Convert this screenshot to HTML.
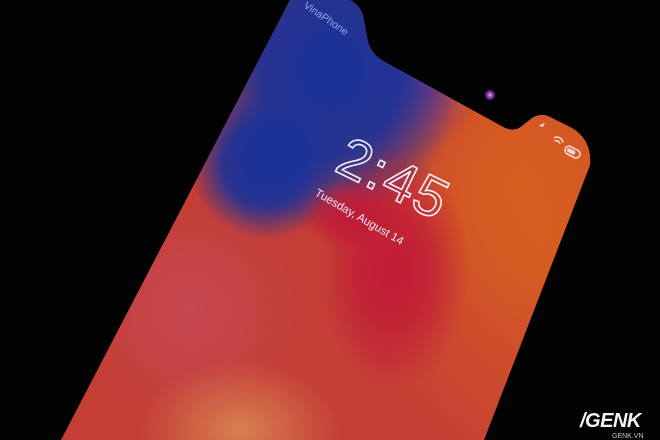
<!DOCTYPE html>
<html><head><meta charset="utf-8"><style>
html,body{margin:0;padding:0;background:#030304;width:660px;height:440px;overflow:hidden;}
svg{display:block}
</style></head><body>
<svg width="660" height="440" viewBox="0 0 660 440" xmlns="http://www.w3.org/2000/svg">
<defs>
<clipPath id="scr">
<path d="M290,0 L350,0 Q362,6 364,20 L368,42 Q372,55 385,62 L505,128 Q515,132 522,126 L532,118 Q540,113 548,116 L572,128 Q592,140 590,165 L484,440 L61,440 Z"/>
</clipPath>
<radialGradient id="gBlue"><stop offset="0" stop-color="#15329a"/><stop offset="0.55" stop-color="#1a3298" stop-opacity="0.9"/><stop offset="1" stop-color="#1a3298" stop-opacity="0"/></radialGradient>
<radialGradient id="gPurp"><stop offset="0" stop-color="#7a3a88"/><stop offset="1" stop-color="#7a3a88" stop-opacity="0"/></radialGradient>
<radialGradient id="gRed"><stop offset="0" stop-color="#c01a36"/><stop offset="0.5" stop-color="#c01a36" stop-opacity="0.7"/><stop offset="1" stop-color="#c01a36" stop-opacity="0"/></radialGradient>
<radialGradient id="gPink"><stop offset="0" stop-color="#c64852"/><stop offset="1" stop-color="#c64852" stop-opacity="0"/></radialGradient>
<radialGradient id="gPeach"><stop offset="0" stop-color="#d88050"/><stop offset="1" stop-color="#d88050" stop-opacity="0"/></radialGradient>
<radialGradient id="gOr"><stop offset="0" stop-color="#d85e20"/><stop offset="1" stop-color="#d85e20" stop-opacity="0"/></radialGradient>
<radialGradient id="gDot"><stop offset="0" stop-color="#f0b0ff"/><stop offset="0.3" stop-color="#b050d0"/><stop offset="1" stop-color="#b050d0" stop-opacity="0"/></radialGradient>
</defs>
<rect width="660" height="440" fill="#c43e36"/>
<rect width="660" height="440" fill="#030304"/>
<g clip-path="url(#scr)">
<rect width="660" height="440" fill="#c43e36"/>
<ellipse cx="540" cy="230" rx="190" ry="260" fill="url(#gOr)"/>
<ellipse cx="520" cy="180" rx="120" ry="140" fill="url(#gOr)"/>
<ellipse cx="410" cy="80" rx="70" ry="80" fill="url(#gPurp)"/>
<ellipse cx="330" cy="70" rx="130" ry="160" fill="url(#gBlue)"/>
<ellipse cx="265" cy="165" rx="75" ry="75" fill="url(#gBlue)"/>
<ellipse cx="395" cy="270" rx="75" ry="120" fill="url(#gRed)"/>
<ellipse cx="350" cy="215" rx="50" ry="35" fill="url(#gRed)"/>
<ellipse cx="190" cy="310" rx="110" ry="110" fill="url(#gPink)"/>
<ellipse cx="240" cy="430" rx="100" ry="70" fill="url(#gPeach)"/>
</g>
<circle cx="490" cy="95" r="6" fill="url(#gDot)"/>
<g fill="#e8ecff" font-family="Liberation Sans, sans-serif">
<text x="0" y="0" font-size="10.5" transform="translate(303,7) rotate(34)" fill="#8aa8f0">VinaPhone</text>
<text x="0" y="0" font-size="56" letter-spacing="2" transform="translate(333,170) rotate(26)" fill="none" stroke="#eef0ff" stroke-width="1.6">2:45</text>
<text x="0" y="0" font-size="11.5" transform="translate(314,195) rotate(30)">Tuesday, August 14</text>
</g>
<g fill="none" stroke="#f0d8d0" stroke-width="1.6" transform="rotate(28 560 150)">
<path d="M530,138 l4,-5 l0,5 z" fill="#f0d8d0" stroke="none"/>
<path d="M549,142 a6,6 0 0 1 10,0 M551,144.5 a4,4 0 0 1 6,0"/>
<rect x="564" y="142" width="16" height="8" rx="4"/>
<rect x="566" y="144" width="9" height="4" rx="2" fill="#f0d8d0" stroke="none"/>
</g>
<text x="580" y="427" font-family="Liberation Sans, sans-serif" font-size="20" font-weight="bold" font-style="italic" fill="#f4f4f4" letter-spacing="-0.5">/GENK</text>
<text x="612" y="438" font-family="Liberation Sans, sans-serif" font-size="7" fill="#c8c8c8">GENK.VN</text>
</svg>
</body></html>
